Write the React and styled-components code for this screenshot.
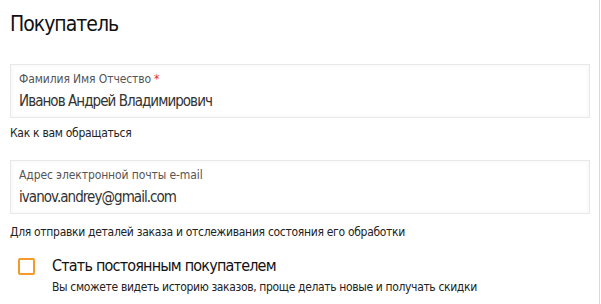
import React from 'react';
import styled, { createGlobalStyle } from 'styled-components';

const GlobalStyle = createGlobalStyle`
  html, body {
    margin: 0;
    padding: 0;
    background: #fff;
  }
  body {
    font-family: "DejaVu Sans Condensed", "DejaVu Sans", sans-serif;
    font-stretch: condensed;
  }
`;

const Page = styled.div`
  width: 600px;
  height: 304px;
  box-sizing: border-box;
  border-right: 1px solid #d9d9d9;
  padding: 0 10px;
  overflow: hidden;
`;

const Title = styled.h2`
  margin: 0;
  padding-top: 10px;
  font-size: 21px;
  line-height: 28px;
  letter-spacing: -1px;
  font-weight: normal;
  color: #111;
`;

const Field = styled.div`
  margin-top: ${(p) => p.$top}px;
  width: 580px;
  height: 54px;
  box-sizing: border-box;
  border: 1px solid #e8e8e8;
  box-shadow: inset 0 0 0 2px #fafafa;
  padding: 6px 8px 0;
`;

const Label = styled.div`
  font-size: 12px;
  line-height: 16px;
  letter-spacing: -0.1px;
  color: #555;
`;

const Required = styled.span`
  color: #e0303a;
  margin-left: 3px;
`;

const Value = styled.div`
  font-size: 15px;
  line-height: 28px;
  letter-spacing: -0.95px;
  color: #333;
`;

const Hint = styled.div`
  margin-top: ${(p) => p.$top}px;
  font-size: 12px;
  line-height: 16px;
  letter-spacing: -0.3px;
  color: #222;
`;

const CheckRow = styled.label`
  margin-top: 18px;
  display: flex;
  align-items: flex-start;
  gap: 17px;
  padding-left: 8px;
`;

const Box = styled.span`
  flex: none;
  width: 17px;
  height: 17px;
  box-sizing: border-box;
  border: 2px solid #f39a2b;
  border-radius: 2px;
`;

const CheckText = styled.div`
  display: flex;
  flex-direction: column;
  margin-top: -2px;
`;

const CheckTitle = styled.div`
  font-size: 16px;
  line-height: 20px;
  letter-spacing: -0.8px;
  color: #111;
`;

const CheckNote = styled.div`
  margin-top: 2px;
  font-size: 12px;
  line-height: 18px;
  letter-spacing: -0.35px;
  color: #222;
`;

export default function App() {
  return (
    <Page>
      <GlobalStyle />
      <Title>Покупатель</Title>
      <Field $top={26}>
        <Label>
          Фамилия Имя Отчество<Required>*</Required>
        </Label>
        <Value>Иванов Андрей Владимирович</Value>
      </Field>
      <Hint $top={7}>Как к вам обращаться</Hint>
      <Field $top={19}>
        <Label>Адрес электронной почты e-mail</Label>
        <Value>ivanov.andrey@gmail.com</Value>
      </Field>
      <Hint $top={10}>Для отправки деталей заказа и отслеживания состояния его обработки</Hint>
      <CheckRow>
        <Box />
        <CheckText>
          <CheckTitle>Стать постоянным покупателем</CheckTitle>
          <CheckNote>Вы сможете видеть историю заказов, проще делать новые и получать скидки</CheckNote>
        </CheckText>
      </CheckRow>
    </Page>
  );
}
